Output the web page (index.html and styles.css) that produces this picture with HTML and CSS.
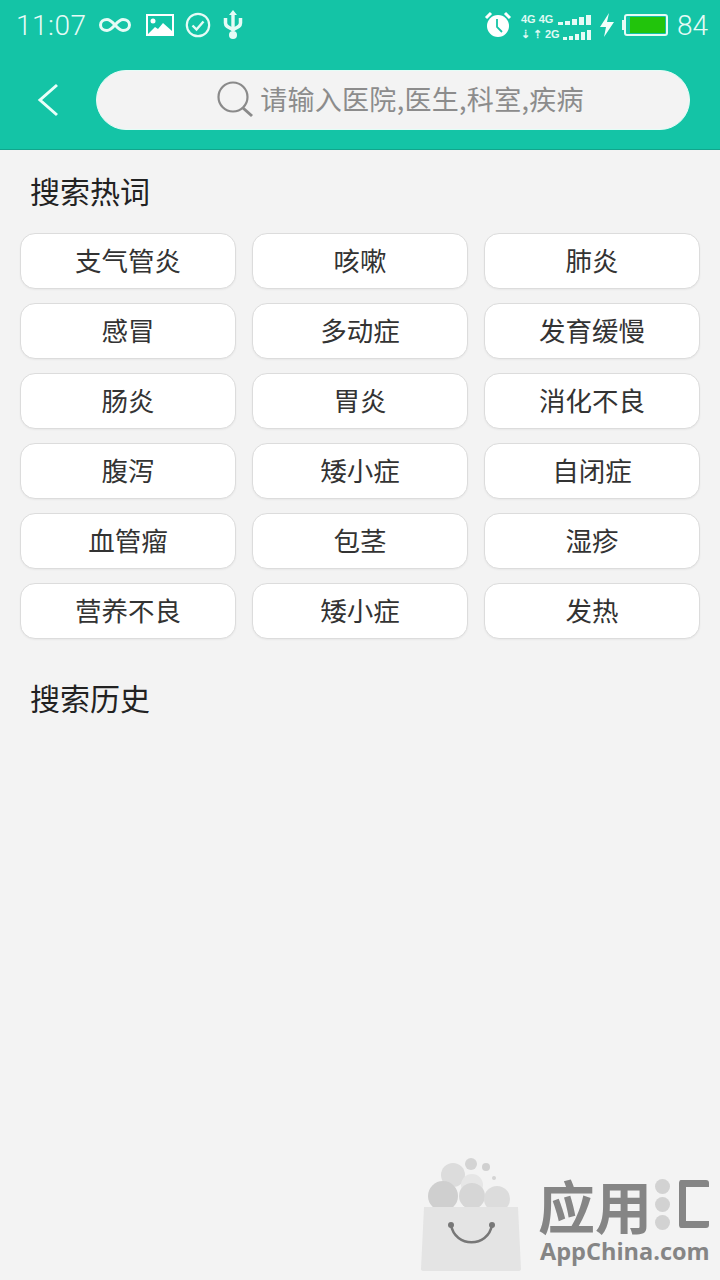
FILE: index.html
```html
<!DOCTYPE html>
<html lang="zh">
<head>
<meta charset="UTF-8" />
<title>搜索</title>
<link rel="stylesheet" href="styles.css">
</head>
<body>

<div class="top">
  <div class="status">
    <span class="time">11:07</span>
    <svg class="ico i-loop" width="34" height="20" viewBox="0 0 34 20"><path d="M9 4.500c-3.500 0-6.500 2-6.500 5.500s3 5.500 6.500 5.500c6 0 10-11 16-11 3.500 0 6.500 2 6.500 5.500s-3 5.500-6.500 5.500c-6 0-10-11-16-11z" fill="none" stroke="#e6fbf6" stroke-width="3"/></svg>
    <svg class="ico i-pic" width="28" height="22" viewBox="0 0 28 22"><rect x="1" y="1" width="26" height="20" fill="none" stroke="#fff" stroke-width="2"/><circle cx="7" cy="7" r="2.500" fill="#fff"/><path d="M2 20l7-7 3 2 5-6 9 8v3z" fill="#fff"/></svg>
    <svg class="ico i-check" width="26" height="26" viewBox="0 0 26 26"><circle cx="13" cy="13" r="11.200" fill="none" stroke="#e6fbf6" stroke-width="2.200"/><path d="M7.500 13.500l4 4 7-8" fill="none" stroke="#e6fbf6" stroke-width="2.400"/></svg>
    <svg class="ico i-usb" width="20" height="30" viewBox="0 0 20 30"><path d="M10 0l4 5h-2.300v16h-3.400v-16h-2.300z" fill="#e6fbf6"/><circle cx="10" cy="25" r="4" fill="#e6fbf6"/><path d="M2.500 8v5c0 3.500 3.500 4.500 7.500 6.500 4-2 7.500-3 7.500-6.500v-5" fill="none" stroke="#e6fbf6" stroke-width="3.500"/></svg>
    <span class="status-gap"></span>
    <svg class="ico" width="28" height="28" viewBox="0 0 28 28"><circle cx="14" cy="15" r="11" fill="#fff"/><path d="M2 7l5-5M26 7l-5-5" stroke="#fff" stroke-width="3"/><path d="M13 8v8l5 5" fill="none" stroke="#14c4a6" stroke-width="1.800"/></svg>
    <div class="net">
      <div class="net-row">
        <span>4G</span><span>4G</span>
        <i class="b1"></i><i class="b2"></i><i class="b3"></i><i class="b4"></i><i class="b5"></i>
      </div>
      <div class="net-row">
        <span>⇣</span><span>⇡</span><span>2G</span>
        <i class="b1"></i><i class="b2"></i><i class="b3"></i><i class="b4"></i><i class="b5"></i>
      </div>
    </div>
    <svg class="ico i-bolt" width="16" height="26" viewBox="0 0 16 26"><path d="M10 1L1 15h6l-2 10 10-15H8z" fill="#f2fffb"/></svg>
    <div class="battery"><div class="battery-fill"></div></div>
    <span class="level">84</span>
  </div>

  <div class="searchbar">
    <svg class="back" width="24" height="34" viewBox="0 0 24 34"><path d="M21 2L4 17l17 15" fill="none" stroke="#e9fff9" stroke-width="3"/></svg>
    <div class="search">
      <svg width="40" height="40" viewBox="0 0 40 40"><circle cx="17" cy="17" r="14.500" fill="none" stroke="#8a8a8a" stroke-width="2.200"/><path d="M27 28l9 8" stroke="#8a8a8a" stroke-width="3"/></svg>
      <span class="search-hint">请输入医院,医生,科室,疾病</span>
    </div>
  </div>
</div>

<div class="content">
  <h2>搜索热词</h2>
  <div class="tags">
    <a>支气管炎</a><a>咳嗽</a><a>肺炎</a>
    <a>感冒</a><a>多动症</a><a>发育缓慢</a>
    <a>肠炎</a><a>胃炎</a><a>消化不良</a>
    <a>腹泻</a><a>矮小症</a><a>自闭症</a>
    <a>血管瘤</a><a>包茎</a><a>湿疹</a>
    <a>营养不良</a><a>矮小症</a><a>发热</a>
  </div>
  <h2 class="history">搜索历史</h2>
</div>

<!-- watermark -->
<div class="mark">
  <svg width="104" height="116" viewBox="0 0 104 116">
    <circle cx="51" cy="6" r="6" fill="#d4d4d4"/><circle cx="66" cy="9" r="4" fill="#d0d0d0"/><circle cx="74" cy="20" r="2" fill="#d4d4d4"/>
    <circle cx="33" cy="17" r="12" fill="#dcdcdc"/><circle cx="52" cy="27" r="11" fill="#e6e6e6"/>
    <circle cx="23" cy="38" r="15" fill="#cfcfcf"/><circle cx="52" cy="38" r="13" fill="#d6d6d6"/><circle cx="77" cy="41" r="13" fill="#dcdcdc"/>
    <path d="M4 49h94l3 62q0 2-3 2H4q-3 0-3-2z" fill="#e4e4e4"/>
    <path d="M31 67c4 23 37 23 41 0" fill="none" stroke="#777" stroke-width="2.500"/>
    <circle cx="31" cy="67" r="3" fill="#777"/><circle cx="72" cy="67" r="3" fill="#777"/>
  </svg>
  <div class="mark-text">
    <div class="mark-cn">应用<span class="mark-dots"><i></i><i></i><i></i></span><span class="mark-c"></span></div>
    <div class="mark-en">AppChina.com</div>
  </div>
</div>

</body>
</html>
```

FILE: styles.css
```css
* {
  box-sizing: border-box;
}
body {
  margin: 0;
  width: 720px;
  height: 1280px;
  position: relative;
  overflow: hidden;
  background: #f3f3f3;
  font-family: "Noto Sans CJK SC", "Noto Sans", sans-serif;
  color: #222;
}
.top {
  height: 150px;
  background: #14c4a6;
  border-bottom: 1px solid #12a58c;
}
.status {
  height: 50px;
  display: flex;
  align-items: center;
  padding: 0 12px 0 16px;
  color: #e6fbf6;
}
.ico {
  flex: none;
}
.i-loop { margin-left: 11px; }
.i-pic { margin-left: 14px; }
.i-check { margin-left: 11px; }
.i-usb { margin-left: 12px; }
.i-bolt { margin-left: 8px; }
.time {
  font-family: Roboto, sans-serif;
  font-size: 28px;
  font-weight: 300;
  letter-spacing: 0.5px;
}
.status-gap {
  flex: 1;
}
.net {
  margin-left: 9px;
  margin-top: 2px;
  width: 70px;
  display: flex;
  flex-direction: column;
  gap: 3px;
}
.net-row {
  display: flex;
  align-items: flex-end;
  gap: 2px;
  height: 12px;
  font-family: "Liberation Sans", sans-serif;
  font-size: 11px;
  font-weight: bold;
  line-height: 12px;
  color: #dffaf3;
}
.net-row span {
  margin-right: 1px;
}
.net-row i {
  width: 5px;
  background: #e6fbf6;
}
.net-row .b1 { height: 3px; margin-left: auto; }
.net-row .b2 { height: 4px; }
.net-row .b3 { height: 6px; }
.net-row .b4 { height: 8px; }
.net-row .b5 { height: 10px; }
.battery {
  position: relative;
  margin-left: 9px;
  width: 44px;
  height: 22px;
  border: 2px solid #e6fbf6;
  border-radius: 3px;
  padding: 1px;
  display: flex;
  justify-content: flex-end;
}
.battery::before {
  content: "";
  position: absolute;
  left: -4px;
  top: 4px;
  width: 2px;
  height: 10px;
  background: #e6fbf6;
}
.battery-fill {
  width: 35px;
  height: 100%;
  background: #22c40c;
}
.level {
  margin-left: 9px;
  font-family: Roboto, sans-serif;
  font-size: 28px;
  font-weight: 300;
}
.searchbar {
  display: flex;
  align-items: center;
  height: 60px;
  margin-top: 20px;
  padding: 0 30px 0 36px;
}
.back {
  flex: none;
  margin-right: 36px;
}
.search {
  flex: 1;
  height: 60px;
  border-radius: 30px;
  border: 1px solid #e4fdf7;
  background: #f3f3f3;
  display: flex;
  align-items: center;
  justify-content: center;
  gap: 4px;
  padding-left: 14px;
  font-size: 27px;
  color: #8c8c8c;
}
.search-hint {
  padding-bottom: 4px;
  letter-spacing: 0.3px;
}
.content {
  padding: 0 20px;
}
h2 {
  margin: 0;
  padding: 17px 10px 0;
  height: 83px;
  font-size: 30px;
  font-weight: 400;
  line-height: 46px;
  color: #222;
}
.tags {
  display: grid;
  grid-template-columns: repeat(3, 216px);
  grid-auto-rows: 56px;
  column-gap: 16px;
  row-gap: 14px;
}
.tags a {
  display: flex;
  align-items: center;
  justify-content: center;
  padding-bottom: 4px;
  background: #fff;
  border: 1px solid #dcdcdc;
  border-radius: 15px;
  box-shadow: 0 1px 2px rgba(0, 0, 0, 0.05);
  font-size: 26.5px;
  color: #333;
}
.history {
  margin-top: 18px;
}
.mark {
  position: absolute;
  left: 420px;
  top: 1158px;
  display: flex;
  gap: 14px;
}
.mark-text {
  padding-top: 18px;
}
.mark-cn {
  display: flex;
  align-items: center;
  height: 56px;
  font-size: 57px;
  font-weight: 700;
  line-height: 56px;
  color: #858585;
}
.mark-dots {
  display: flex;
  flex-direction: column;
  gap: 3px;
  margin: 0 9px 0 3px;
}
.mark-dots i {
  width: 15px;
  height: 15px;
  border-radius: 50%;
  background: #d2d2d2;
}
.mark-c {
  width: 30px;
  height: 48px;
  border: 7px solid #858585;
  border-right: none;
  border-radius: 3px;
}
.mark-en {
  margin-top: 5px;
  padding-left: 2px;
  font-family: "Open Sans", sans-serif;
  font-size: 23.5px;
  font-weight: 700;
  line-height: 28px;
  color: #858585;
}
```
